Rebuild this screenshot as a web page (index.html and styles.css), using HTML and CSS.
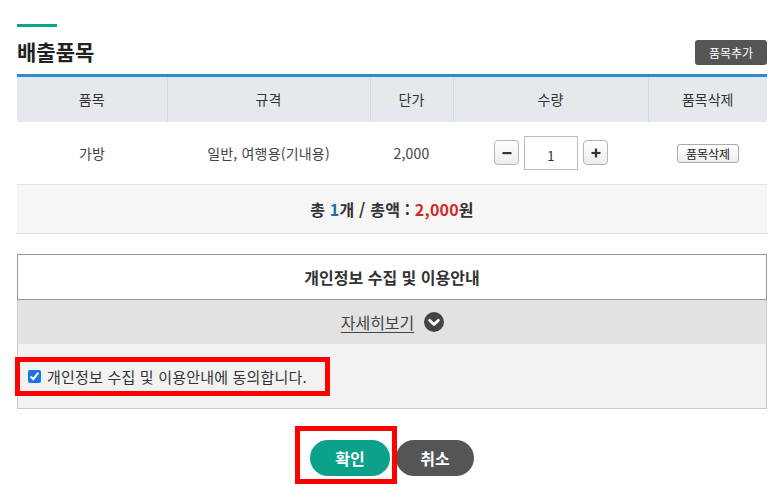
FILE: index.html
```html
<!DOCTYPE html>
<html lang="ko">
<head>
<meta charset="utf-8">
<link rel="stylesheet" href="styles.css">
</head>
<body>
<div class="page">
  <div class="accent"></div>
  <div class="head">
    <h2 class="title">배출품목</h2>
    <button class="add-btn" type="button">품목추가</button>
  </div>
  <table class="items">
    <colgroup>
      <col class="c1"><col class="c2"><col class="c3"><col class="c4"><col class="c5">
    </colgroup>
    <thead>
      <tr><th>품목</th><th>규격</th><th>단가</th><th>수량</th><th>품목삭제</th></tr>
    </thead>
    <tbody>
      <tr class="row">
        <td>가방</td>
        <td>일반, 여행용(기내용)</td>
        <td>2,000</td>
        <td>
          <div class="qty">
            <button class="qbtn" type="button">
              <svg width="10" height="10" viewBox="0 0 10 10"><rect x="0.5" y="4" width="9" height="2.2" fill="#333"/></svg>
            </button>
            <div class="qinput">1</div>
            <button class="qbtn" type="button">
              <svg width="10" height="10" viewBox="0 0 10 10"><rect x="0.5" y="3.9" width="9" height="2.2" fill="#333"/><rect x="3.9" y="0.5" width="2.2" height="9" fill="#333"/></svg>
            </button>
          </div>
        </td>
        <td><button class="del-btn" type="button">품목삭제</button></td>
      </tr>
      <tr class="total">
        <td colspan="5">총 <span class="blue">1</span>개 / 총액 : <span class="red">2,000</span>원</td>
      </tr>
    </tbody>
  </table>

  <div class="privacy">
    <div class="p-title">개인정보 수집 및 이용안내</div>
    <div class="p-more">
      <span class="more-link">자세히보기</span>
      <svg class="more-icon" width="20" height="20" viewBox="0 0 20 20">
        <circle cx="10" cy="10" r="10" fill="#444"/>
        <path d="M5.6 8.2 L10 12.4 L14.4 8.2" fill="none" stroke="#fff" stroke-width="2.8" stroke-linecap="round" stroke-linejoin="round"/>
      </svg>
    </div>
    <div class="p-agree">
      <label class="agree">
        <input type="checkbox" checked>
        <span>개인정보 수집 및 이용안내에 동의합니다.</span>
      </label>
    </div>
  </div>

  <div class="actions">
    <div class="mark-wrap">
      <button class="btn ok" type="button">확인</button>
      <div class="mark"></div>
    </div>
    <button class="btn cancel" type="button">취소</button>
  </div>
</div>
</body>
</html>
```
FILE: styles.css
```css
* { box-sizing: border-box; }
html, body { margin: 0; padding: 0; background: #fff; }
body {
  font-family: "Noto Sans CJK KR", "Noto Sans", sans-serif;
  color: #333;
}
.page {
  width: 780px;
  padding: 24px 13px 20px 17px;
}
.accent {
  width: 40px;
  height: 3px;
  background: #0ca38c;
}
.head {
  height: 47px;
  display: flex;
  align-items: center;
  justify-content: space-between;
}
.title {
  margin: 0;
  font-size: 21px;
  font-weight: 700;
  color: #222;
  line-height: 1;
  padding-top: 2px;
}
.add-btn {
  width: 72px;
  height: 25px;
  margin-top: 3px;
  border: 0;
  border-radius: 3px;
  background: #555;
  color: #fff;
  font-family: inherit;
  font-size: 12px;
  padding: 0;
  line-height: 25px;
}
.items {
  width: 750px;
  border-collapse: collapse;
  border-top: 3px solid #2b8bd0;
  table-layout: fixed;
}
.c1 { width: 150px; }
.c2 { width: 203px; }
.c3 { width: 83px; }
.c4 { width: 195px; }
.c5 { width: 119px; }
.items th {
  height: 46px;
  background: #e5e9ec;
  font-weight: 400;
  font-size: 14px;
  color: #333;
  border-left: 1px solid #d3d8dc;
  padding: 0;
}
.items th:first-child { border-left: 0; }
.items td {
  text-align: center;
  font-size: 14px;
  color: #444;
  padding: 0;
  letter-spacing: 0.2px;
}
.row td {
  height: 63px;
  border-bottom: 1px solid #e3e3e3;
}
.total td {
  height: 49px;
  background: #f6f6f6;
  border-bottom: 1px solid #dcdcdc;
  font-weight: 700;
  font-size: 16px;
  color: #333;
}
.blue { color: #1f6fae; }
.red { color: #d0282a; }
.qty {
  display: flex;
  justify-content: center;
  align-items: center;
  gap: 5px;
  padding-left: 1px;
}
.qbtn {
  width: 25px;
  height: 25px;
  border: 1px solid #b5b5b5;
  border-radius: 4px;
  background: linear-gradient(#fff, #ececec);
  padding: 0;
  display: flex;
  align-items: center;
  justify-content: center;
}
.qinput {
  width: 54px;
  height: 34px;
  border: 1px solid #bbb;
  background: #fff;
  font-size: 13px;
  line-height: 38px;
  text-align: center;
  color: #333;
}
.del-btn {
  width: 62px;
  height: 19px;
  border: 1px solid #aaa;
  border-radius: 3px;
  background: linear-gradient(#fff, #ededed);
  font-family: inherit;
  font-size: 12px;
  line-height: 17px;
  color: #222;
  padding: 0;
  margin-left: 1px;
}
.privacy {
  margin-top: 20px;
  border: 1px solid #ccc;
}
.p-title {
  height: 46px;
  margin: -1px -1px 0 -1px;
  border: 1px solid #999;
  background: #fff;
  text-align: center;
  font-size: 16px;
  font-weight: 700;
  color: #333;
  line-height: 44px;
}
.p-more {
  height: 44px;
  background: #e2e2e2;
  display: flex;
  align-items: center;
  justify-content: center;
  gap: 10px;
  padding-left: 1px;
}
.more-link {
  font-size: 16px;
  color: #444;
  text-decoration: underline;
  text-underline-offset: 3px;
  line-height: 1;
}
.more-icon { display: block; }
.p-agree {
  height: 64px;
  background: #f2f2f2;
  padding-top: 13px;
}
.agree {
  margin-left: -3px;
  width: 315px;
  height: 39px;
  border: 5px solid #f00;
  display: flex;
  align-items: center;
  padding-left: 8px;
  gap: 6px;
  font-size: 15px;
  color: #333;
  letter-spacing: 0.2px;
}
.agree input {
  margin: 0;
  width: 13px;
  height: 13px;
  accent-color: #1a73e8;
}
.actions {
  margin-top: 31px;
  display: flex;
  justify-content: center;
  gap: 6px;
}
.mark-wrap {
  position: relative;
}
.mark {
  position: absolute;
  left: -15px;
  top: -14px;
  width: 102px;
  height: 58px;
  border: 5px solid #f00;
}
.btn {
  height: 36px;
  border: 0;
  border-radius: 18px;
  color: #fff;
  font-family: inherit;
  font-size: 16px;
  font-weight: 700;
  padding: 0;
  display: block;
}
.ok { width: 80px; background: #0ca18b; }
.cancel { width: 78px; background: #555; }
```
